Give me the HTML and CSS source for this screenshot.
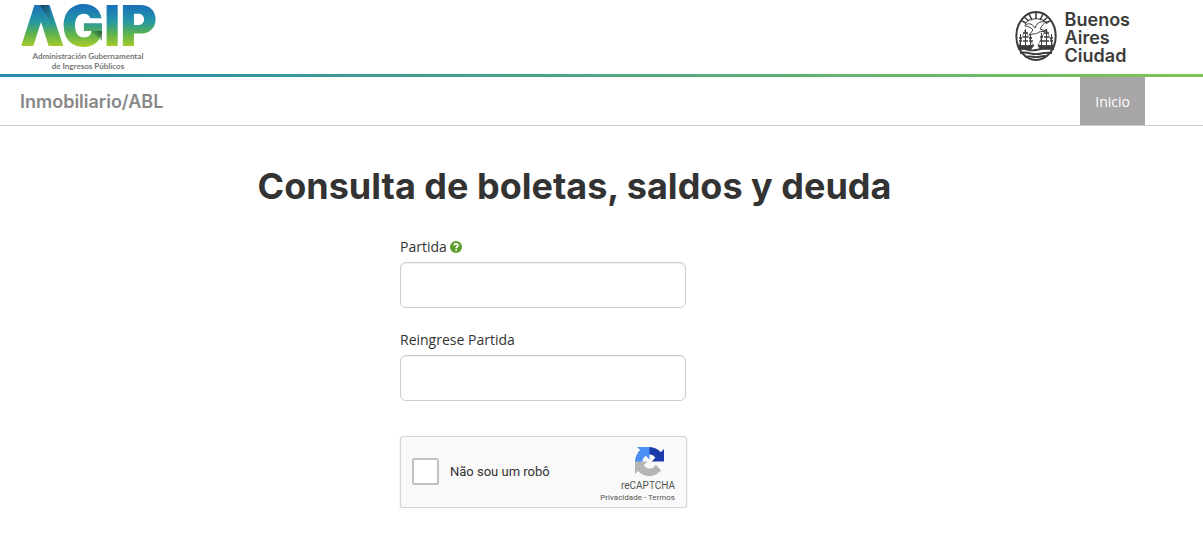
FILE: index.html
```html
<!DOCTYPE html>
<html lang="es">
<head>
<meta charset="utf-8">
<meta name="viewport" content="width=device-width, initial-scale=1">
<title>Inmobiliario/ABL</title>
<link rel="stylesheet" href="styles.css">
</head>
<body>
<header class="header">
  <div class="agip">
    <svg class="agip-mark" width="140" height="48" viewBox="0 0 140 48" aria-label="AGIP">
      <defs>
        <linearGradient id="brand" gradientUnits="userSpaceOnUse" x1="0" y1="5" x2="0" y2="46">
          <stop offset="0" stop-color="#1b6fba"/><stop offset=".4" stop-color="#2497a5"/>
          <stop offset=".7" stop-color="#5cb24f"/><stop offset="1" stop-color="#a5cb2b"/>
        </linearGradient>
        <linearGradient id="foldA" x1="0" y1="0" x2=".6" y2="1">
          <stop offset="0" stop-color="#143c58"/><stop offset="1" stop-color="#2b9f8c" stop-opacity="0"/>
        </linearGradient>
        <linearGradient id="foldG" x1="0" y1="1" x2="1" y2="0">
          <stop offset="0" stop-color="#5cb24f" stop-opacity="0"/><stop offset="1" stop-color="#174f35"/>
        </linearGradient>
      </defs>
      <text class="agip-text" x="0" y="46" fill="url(#brand)">AGIP</text>
      <path d="M18 10h7l6 36H12z" fill="url(#brand)"/>
      <path d="M13 47 21 22 29 47z" fill="#fff"/>
      <path d="M20 5h8l8 26z" fill="url(#foldA)"/>
      <path d="M71 31h11v10z" fill="url(#foldG)"/>
    </svg>
    <p class="agip-caption">Administración Gubernamental<br>de Ingresos Públicos</p>
  </div>
  <div class="city">
    <svg width="42" height="50" viewBox="0 0 42 50" fill="none" stroke="#3c3c3b" aria-hidden="true">
      <ellipse cx="21" cy="25" rx="19.7" ry="23.9" stroke-width="2"/>
      <path d="M21 8V2M17 9 14 3M25 9l3-6M14 10 9 6M28 10l5-4M11 12l-4-2M31 12l4-2" stroke-width="1.6"/>
      <path d="M10 13c3-7 19-7 22 0" stroke-width="1"/>
      <path d="M10 14c5-3 8 0 10 3 2-6 6-7 12-6-4 1-5 4-7 7l6 2-7 1c-3 3-6 1-10 3l4-5c-2-2-4-4-8-4z" fill="#fff" stroke-width="1"/>
      <path d="M5.500 23v11M10.500 18v17M15.500 23v11M26.500 22v13M31.500 18v17M36.500 23v11" stroke-width="1"/>
      <path d="M4 27h3M4 30h3M8 22h5M8 26h5M8 30h5M14 27h3M14 30h4M25 26h3M25 30h4M29 22h5M29 26h5M29 30h5M35 27h3M35 30h3" stroke-width="1.300"/>
      <path d="M4 34l6-15 8 15M23 34l8-16 7 16" stroke-width=".6"/>
      <path d="M2 34c5 1 12 1 17 0l-3 4H4zM23 34c5 1 11 1 17 0l-4 4H25z" fill="#3c3c3b" stroke-width="1"/>
      <path d="M3 38c8-2 10 3 18 1s12-2 18-1M5 42c8-2 11 2 18 1s9-2 14-1M10 46c6-2 9 1 13 0s6-1 9-1" stroke-width="1.9"/>
    </svg>
    <span class="city-name">Buenos<br>Aires<br>Ciudad</span>
  </div>
</header>
<nav class="nav">
  <span class="nav-title">Inmobiliario/ABL</span>
  <a class="nav-link" href="#">Inicio</a>
</nav>
<main class="main">
  <h1 class="title">Consulta de boletas, saldos y deuda</h1>
  <form class="form">
    <div class="field">
      <label class="label" for="partida">Partida
        <svg class="help" width="12" height="12" viewBox="0 0 12 12" aria-hidden="true">
          <circle cx="6" cy="6" r="6" fill="#5c9e2c"/>
          <path d="M4 4.4C4.2 2.2 8 2.3 8 4.4 8 5.800 6.2 5.7 6.2 7.2" fill="none" stroke="#fff" stroke-width="1.7"/>
          <path d="M5.3 8.2H7v1.6H5.3z" fill="#fff"/>
        </svg>
      </label>
      <input class="input" id="partida" type="text">
    </div>
    <div class="field">
      <label class="label" for="partida2">Reingrese Partida</label>
      <input class="input" id="partida2" type="text">
    </div>
    <div class="captcha">
      <input class="captcha-check" id="robot" type="checkbox">
      <label class="captcha-label" for="robot">Não sou um robô</label>
      <div class="captcha-brand">
        <svg class="captcha-icon" width="29" height="29" viewBox="0 0 64 64" aria-hidden="true">
          <path fill="#1c3aa9" d="M64 31.955l-.033-1.37V4.687l-7.16 7.16C50.948 4.674 42.033.093 32.05.093c-10.4 0-19.622 4.96-25.458 12.64l11.736 11.86a15.55 15.55 0 0 1 4.754-5.334c2.05-1.6 4.952-2.906 8.968-2.906.485 0 .86.057 1.135.163 4.976.393 9.288 3.14 11.828 7.124l-8.307 8.307L64 31.953"/>
          <path fill="#4a90f5" d="M31.862.094l-1.37.033H4.594l7.16 7.16C4.58 13.147 0 22.06 0 32.046c0 10.4 4.96 19.622 12.64 25.458L24.5 45.768a15.55 15.55 0 0 1-5.334-4.754c-1.6-2.05-2.906-4.952-2.906-8.968 0-.485.057-.86.163-1.135.393-4.976 3.14-9.288 7.124-11.828l8.307 8.307L31.86.095"/>
          <path fill="#b5b5b5" d="M.001 32.045l.033 1.37v25.898l7.16-7.16c5.86 7.173 14.774 11.754 24.76 11.754 10.4 0 19.622-4.96 25.458-12.64l-11.736-11.86a15.55 15.55 0 0 1-4.754 5.334c-2.05 1.6-4.952 2.906-8.968 2.906-.485 0-.86-.057-1.135-.163-4.976-.393-9.288-3.14-11.828-7.124l8.307-8.307c-10.522.04-22.4.066-27.295-.005"/>
        </svg>
        <span class="captcha-name">reCAPTCHA</span>
        <span class="captcha-links"><a href="#">Privacidade</a> - <a href="#">Termos</a></span>
      </div>
    </div>
  </form>
</main>
</body>
</html>
```
FILE: styles.css
```css
* { box-sizing: border-box; }
body { margin: 0; background: #fff; color: #333; font: 14px/20px "Open Sans", sans-serif; }
a { color: inherit; text-decoration: none; }
.header {
  display: flex; justify-content: space-between; align-items: flex-start;
  height: 77px; padding: 0 73px 0 20px;
  border-bottom: 3px solid;
  border-image: linear-gradient(90deg, #2289b0, #7fc455) 1;
}
.agip { width: 140px; }
.agip-mark { display: block; overflow: visible; }
.agip-text { font: 900 56px Inter, sans-serif; }
.agip-caption { margin: 3px 4px 0 0; color: #777; font: 700 8px/10px Lato, sans-serif; text-align: center; white-space: nowrap; }
.city { display: flex; gap: 8px; padding-top: 11px; }
.city-name { color: #3c3c3b; font: 600 18px/18px Inter, sans-serif; }
.nav {
  display: flex; justify-content: space-between; align-items: stretch;
  height: 49px; padding: 0 58px 0 20px; border-bottom: 1px solid #ccc;
}
.nav-title { color: #888; font: 600 18px/50px Inter, sans-serif; }
.nav-link { padding: 0 15px; background: #a7a5a6; color: #fff; line-height: 50px; }
.main { padding: 40px 54px 0 0; }
.title { margin: 0; font: 700 36px/40px Inter, sans-serif; text-align: center; }
.form { width: 349px; margin: 31px auto 0; }
.field { width: 286px; margin-bottom: 22px; }
.label { display: block; margin-bottom: 5px; }
.help { vertical-align: -1px; }
.input { display: block; width: 100%; height: 46px; padding: 0 12px; border: 1px solid #ccc; border-radius: 6px; box-shadow: inset 0 1px 1px #eee; font: inherit; }
.captcha {
  display: flex; align-items: center; width: 287px; height: 72px; margin-top: 35px; padding: 0 11px;
  border: 1px solid #d3d3d3; border-radius: 3px; background: #f9f9f9; box-shadow: 0 1px 2px #ddd;
}
.captcha-check { appearance: none; width: 27px; height: 27px; margin: 0 11px 2px 0; border: 2px solid #c1c1c1; border-radius: 2px; background: #fff; }
.captcha-label { flex: 1; font: 13px/18px Roboto, sans-serif; }
.captcha-brand { display: flex; flex-direction: column; align-items: flex-end; padding-top: 6px; color: #555; font-family: Roboto, sans-serif; }
.captcha-icon { margin-right: 11px; }
.captcha-name { margin-top: 4px; font-size: 10px; line-height: 12px; }
.captcha-links { font-size: 8px; line-height: 12px; }
```
